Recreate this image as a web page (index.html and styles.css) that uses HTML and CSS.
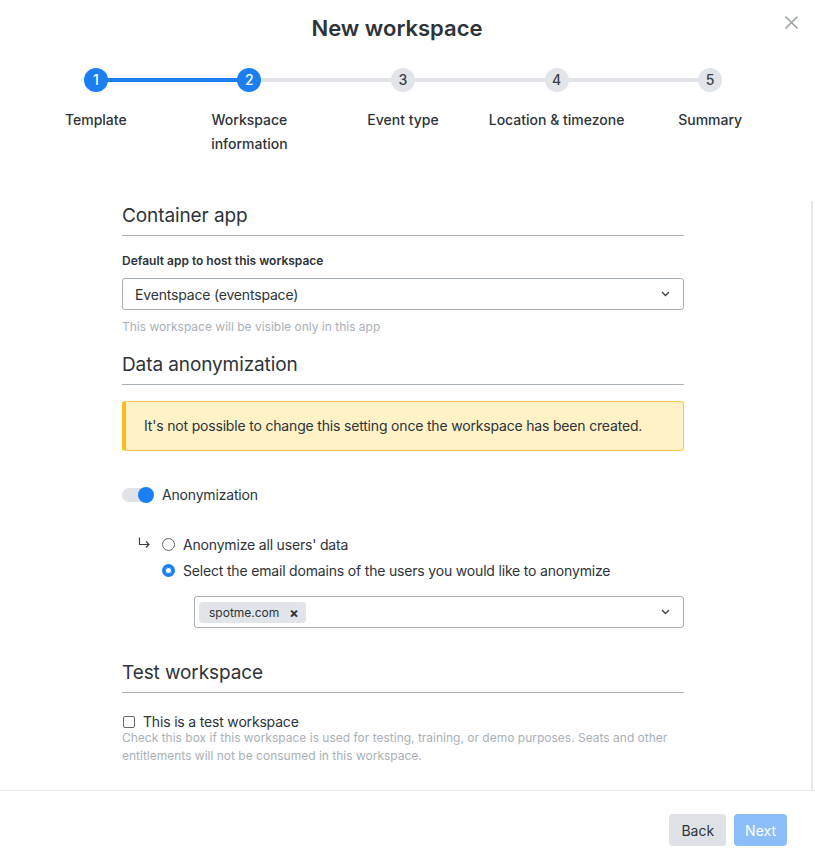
FILE: index.html
```html
<!DOCTYPE html>
<html lang="en">
<head>
<meta charset="UTF-8">
<meta name="viewport" content="width=device-width, initial-scale=1.0">
<title>New workspace</title>
<link rel="stylesheet" href="styles.css">
</head>
<body>

<div class="modal">
    <header class="modal-head">
        <h1>New workspace</h1>
        <button class="close" type="button" aria-label="Close">
            <svg width="13" height="13" viewBox="0 0 13 13"><path d="M1 1L12 12M12 1L1 12" stroke="#9aa1a8" stroke-width="1.6" stroke-linecap="round"/></svg>
        </button>
    </header>

    <ol class="steps">
        <li class="step done"><span class="dot">1</span><span class="name">Template</span></li>
        <li class="step done"><span class="dot">2</span><span class="name">Workspace<br>information</span></li>
        <li class="step"><span class="dot">3</span><span class="name">Event type</span></li>
        <li class="step"><span class="dot">4</span><span class="name">Location &amp; timezone</span></li>
        <li class="step"><span class="dot">5</span><span class="name">Summary</span></li>
    </ol>

    <div class="modal-body">
        <form class="form">
            <section class="group">
                <h2>Container app</h2>
                <label class="field-label">Default app to host this workspace</label>
                <div class="select">
                    <span>Eventspace (eventspace)</span>
                    <svg class="chevron" width="9" height="6" viewBox="0 0 9 6"><path d="M1 1l3.5 3.5L8 1" fill="none" stroke="#3a4046" stroke-width="1.3"/></svg>
                </div>
                <p class="help">This workspace will be visible only in this app</p>
            </section>

            <section class="group">
                <h2>Data anonymization</h2>
                <div class="warning">It's not possible to change this setting once the workspace has been created.</div>

                <div class="toggle-row">
                    <span class="toggle"><span class="knob"></span></span>
                    <span>Anonymization</span>
                </div>

                <div class="options">
                    <svg class="sub-arrow" width="13" height="12" viewBox="0 0 13 12"><path d="M1.5 0.5V7.5H11M8 4.5l3 3-3 3" fill="none" stroke="#3a4046" stroke-width="1.2"/></svg>
                    <div class="radios">
                        <div class="radio-row"><span class="radio"></span>Anonymize all users' data</div>
                        <div class="radio-row"><span class="radio checked"></span>Select the email domains of the users you would like to anonymize</div>
                    </div>
                </div>

                <div class="select tags">
                    <span class="tag">spotme.com <b>&#215;</b></span>
                    <svg class="chevron" width="9" height="6" viewBox="0 0 9 6"><path d="M1 1l3.5 3.5L8 1" fill="none" stroke="#3a4046" stroke-width="1.3"/></svg>
                </div>
            </section>

            <section class="group">
                <h2>Test workspace</h2>
                <div class="check-row"><span class="checkbox"></span>This is a test workspace</div>
                <p class="help wide">Check this box if this workspace is used for testing, training, or demo purposes. Seats and other entitlements will not be consumed in this workspace.</p>
            </section>
        </form>
    </div>

    <footer class="modal-foot">
        <button class="btn back" type="button">Back</button>
        <button class="btn next" type="button" disabled>Next</button>
    </footer>
</div>

</body>
</html>
```

FILE: styles.css
```css
body {
    margin: 0;
    padding: 0;
    background: #fff;
    font-family: Inter, "Noto Sans", sans-serif;
    color: #2d3339;
}
.modal {
    width: 815px;
    height: 864px;
    background: #fff;
}
.modal-head {
    position: relative;
    padding: 12px 21px 0 0;
    text-align: center;
}
.modal-head h1 {
    margin: 0;
    font-size: 22px;
    line-height: 32px;
    font-weight: 600;
}
.close {
    position: absolute;
    top: 16px;
    right: 17px;
    border: none;
    background: none;
    padding: 0;
    cursor: pointer;
}

/* stepper */
.steps {
    display: grid;
    grid-template-columns: repeat(5, 1fr);
    width: 768px;
    margin: 24px 0 0 19px;
    padding: 0;
    list-style: none;
}
.step {
    position: relative;
    display: flex;
    flex-direction: column;
    align-items: center;
    text-align: center;
}
.step + .step::before {
    content: "";
    position: absolute;
    top: 10px;
    left: -50%;
    width: 100%;
    height: 4px;
    background: #e1e4e8;
}
.step.done + .step.done::before {
    background: #1b7ff2;
}
.dot {
    position: relative;
    z-index: 1;
    width: 24px;
    height: 24px;
    border-radius: 50%;
    background: #e1e4e8;
    color: #3a4046;
    font-size: 14px;
    font-weight: 500;
    line-height: 24px;
}
.done .dot {
    background: #1b7ff2;
    color: #fff;
}
.name {
    margin-top: 16px;
    font-size: 14px;
    font-weight: 500;
    line-height: 24px;
}

/* body */
.modal-body {
    height: 589px;
    margin-top: 45px;
    margin-right: 2px;
    border-right: 2px solid #e8e8e8;
    box-sizing: border-box;
}
.form {
    width: 562px;
    margin-left: 122px;
    font-size: 14px;
    letter-spacing: -0.18px;
}
.group h2 {
    margin: 0;
    padding-bottom: 4px;
    border-bottom: 1px solid #a6aeb6;
    font-size: 19px;
    font-weight: 400;
    line-height: 30px;
    letter-spacing: -0.1px;
}
.group + .group {
    margin-top: 14px;
}
.group:last-child {
    margin-top: 30px;
}
.field-label {
    display: block;
    margin-top: 16px;
    font-size: 12px;
    font-weight: 600;
    line-height: 18px;
    letter-spacing: 0;
}
.select {
    display: flex;
    align-items: center;
    justify-content: space-between;
    height: 32px;
    margin-top: 8px;
    padding: 0 13px 0 12px;
    border: 1px solid #a6aeb6;
    border-radius: 3px;
    box-sizing: border-box;
}
.help {
    margin: 8px 0 0;
    font-size: 12px;
    line-height: 18px;
    letter-spacing: 0;
    color: #a9b0b7;
}
.help.wide {
    margin-top: -3px;
}

.warning {
    margin-top: 16px;
    padding: 14px 20px 14px 18px;
    border: 1px solid #fbc943;
    border-left: 4px solid #fbbd1e;
    border-radius: 3px;
    background: #fff2c7;
    line-height: 20px;
}

.toggle-row {
    display: flex;
    align-items: center;
    gap: 8px;
    margin-top: 34px;
    line-height: 20px;
}
.toggle {
    position: relative;
    width: 32px;
    height: 14px;
    border-radius: 7px;
    background: #dfe2e6;
}
.knob {
    position: absolute;
    top: -1px;
    right: 0;
    width: 16px;
    height: 16px;
    border-radius: 50%;
    background: #1b7ff2;
}

.options {
    display: flex;
    margin-top: 29px;
    padding-left: 16px;
}
.sub-arrow {
    margin-top: 3px;
    margin-right: 11px;
}
.radio-row {
    display: flex;
    align-items: center;
    gap: 8px;
    height: 20px;
}
.radio-row + .radio-row {
    margin-top: 6px;
}
.radio {
    width: 11px;
    height: 11px;
    border: 1px solid #5f666c;
    border-radius: 50%;
    box-sizing: content-box;
}
.radio.checked {
    width: 7px;
    height: 7px;
    border: 3px solid #1b7ff2;
    background: #fff;
    box-shadow: 0 0 0 1px #1b7ff2 inset;
}
.select.tags {
    margin: 16px 0 0 72px;
    padding-left: 4px;
}
.tag {
    display: inline-flex;
    align-items: center;
    gap: 10px;
    height: 21px;
    padding: 0 7px 0 10px;
    border-radius: 4px;
    background: #e1e4e8;
    font-size: 12px;
    letter-spacing: 0;
}
.tag b {
    font-size: 14px;
}

.check-row {
    display: flex;
    align-items: center;
    gap: 8px;
    margin-top: 19px;
    line-height: 20px;
}
.checkbox {
    width: 10px;
    height: 10px;
    margin-left: 1px;
    border: 1px solid #5f666c;
    border-radius: 2px;
}

/* footer */
.modal-foot {
    display: flex;
    justify-content: flex-end;
    gap: 8px;
    padding: 23px 28px 0 0;
    border-top: 1px solid #ececec;
}
.btn {
    height: 32px;
    padding: 0 12px;
    border: none;
    border-radius: 4px;
    font-family: inherit;
    font-size: 14px;
    cursor: pointer;
}
.back {
    background: #dee2e6;
    color: #2d3339;
}
.next {
    padding: 0 11px;
    background: #8bbdf8;
    color: #fff;
}
```
